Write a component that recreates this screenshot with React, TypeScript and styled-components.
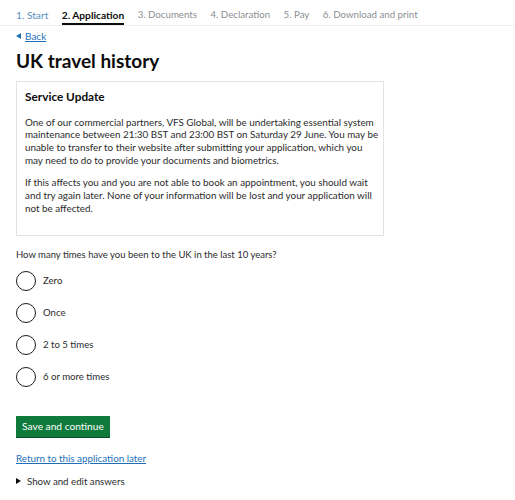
import React from "react";
import styled, { createGlobalStyle } from "styled-components";

const Global = createGlobalStyle`
  html, body { margin: 0; padding: 0; background: #fff; }
  body { font-family: Lato, "Noto Sans", "Liberation Sans", sans-serif; color: #0b0c0c; }
`;

const Page = styled.div`
  width: 515px;
  height: 500px;
  box-sizing: border-box;
  padding: 0 16px;
  overflow: hidden;
`;

const Nav = styled.nav`
  display: flex;
  gap: 13.5px;
  height: 26px;
  border-bottom: 1px solid #f0f0f0;
  box-sizing: border-box;
  margin: 0 -16px;
  padding: 0 16px;
`;

const Step = styled.a<{ $state: "done" | "active" | "todo" }>`
  font-size: ${(p) => (p.$state === "todo" ? "9.7px" : "10.2px")};
  line-height: 1;
  padding-top: 10px;
  height: 25px;
  box-sizing: border-box;
  text-decoration: none;
  font-weight: ${(p) => (p.$state === "active" ? 700 : 400)};
  color: ${(p) => (p.$state === "active" ? "#0b0c0c" : p.$state === "done" ? "#5b8fc0" : "#8a8f92")};
  border-bottom: ${(p) => (p.$state === "active" ? "2px solid #0b0c0c" : "2px solid transparent")};
`;

const BackLink = styled.a`
  display: flex;
  width: fit-content;
  align-items: center;
  gap: 4px;
  margin-top: 4px;
  font-size: 10px;
  line-height: 12px;
  color: #1d70b8;
  text-decoration: underline;
  &::before {
    content: "";
    border-style: solid;
    border-width: 3.5px 5px 3.5px 0;
    border-color: transparent #1d70b8 transparent transparent;
  }
`;

const Heading = styled.h1`
  margin: 6px 0 0;
  font-size: 19px;
  line-height: 26px;
  font-weight: 700;
`;

const Notice = styled.div`
  margin-top: 7px;
  width: 368px;
  box-sizing: border-box;
  border: 1px solid #e3e3e3;
  padding: 7px 8px 20px;
`;

const NoticeTitle = styled.h2`
  margin: 0;
  font-size: 11.8px;
  line-height: 16px;
  font-weight: 700;
`;

const Para = styled.p`
  margin: 10.6px 0 0;
  font-size: 9.85px;
  line-height: 12.7px;
  color: #2b2c2c;
  white-space: nowrap;
  & + & { margin-top: 10px; }
`;

const Question = styled.div`
  margin-top: 13px;
  font-size: 9.5px;
  line-height: 12px;
  color: #2b2c2c;
`;

const Options = styled.div`
  display: flex;
  flex-direction: column;
  gap: 12px;
  margin-top: 10px;
`;

const Option = styled.label`
  display: flex;
  align-items: center;
  gap: 7px;
  height: 20px;
  font-size: 9.6px;
  color: #2b2c2c;
`;

const Circle = styled.span`
  width: 20px;
  height: 20px;
  box-sizing: border-box;
  border: 1.6px solid #1b1c1c;
  border-radius: 50%;
  flex: none;
`;

const Button = styled.button`
  display: block;
  margin-top: 29px;
  height: 21px;
  width: 94px;
  padding: 0;
  border: 0;
  background: #0f7a3c;
  box-shadow: 0 1px 0 #0a4f27;
  color: #fff;
  font-family: inherit;
  font-size: 10.2px;
`;

const LaterLink = styled.a`
  display: block;
  width: fit-content;
  margin-top: 15px;
  font-size: 9.8px;
  line-height: 12px;
  color: #1d70b8;
  text-decoration: underline;
`;

const Details = styled.div`
  display: flex;
  align-items: center;
  gap: 6px;
  margin-top: 11px;
  font-size: 9.7px;
  line-height: 12px;
  color: #2b2c2c;
  &::before {
    content: "";
    border-style: solid;
    border-width: 3.5px 0 3.5px 5px;
    border-color: transparent transparent transparent #0b0c0c;
  }
`;

const steps: { label: string; state: "done" | "active" | "todo" }[] = [
  { label: "1. Start", state: "done" },
  { label: "2. Application", state: "active" },
  { label: "3. Documents", state: "todo" },
  { label: "4. Declaration", state: "todo" },
  { label: "5. Pay", state: "todo" },
  { label: "6. Download and print", state: "todo" },
];

const options = ["Zero", "Once", "2 to 5 times", "6 or more times"];

export default function App() {
  return (
    <Page>
      <Global />
      <Nav>
        {steps.map((s) => (
          <Step key={s.label} $state={s.state}>{s.label}</Step>
        ))}
      </Nav>
      <BackLink href="#">Back</BackLink>
      <Heading>UK travel history</Heading>
      <Notice>
        <NoticeTitle>Service Update</NoticeTitle>
        <Para>
          One of our commercial partners, VFS Global, will be undertaking essential system
          <br />
          maintenance between 21:30 BST and 23:00 BST on Saturday 29 June. You may be
          <br />
          unable to transfer to their website after submitting your application, which you
          <br />
          may need to do to provide your documents and biometrics.
        </Para>
        <Para>
          If this affects you and you are not able to book an appointment, you should wait
          <br />
          and try again later. None of your information will be lost and your application will
          <br />
          not be affected.
        </Para>
      </Notice>
      <Question>How many times have you been to the UK in the last 10 years?</Question>
      <Options>
        {options.map((o) => (
          <Option key={o}>
            <Circle />
            {o}
          </Option>
        ))}
      </Options>
      <Button>Save and continue</Button>
      <LaterLink href="#">Return to this application later</LaterLink>
      <Details>Show and edit answers</Details>
    </Page>
  );
}
